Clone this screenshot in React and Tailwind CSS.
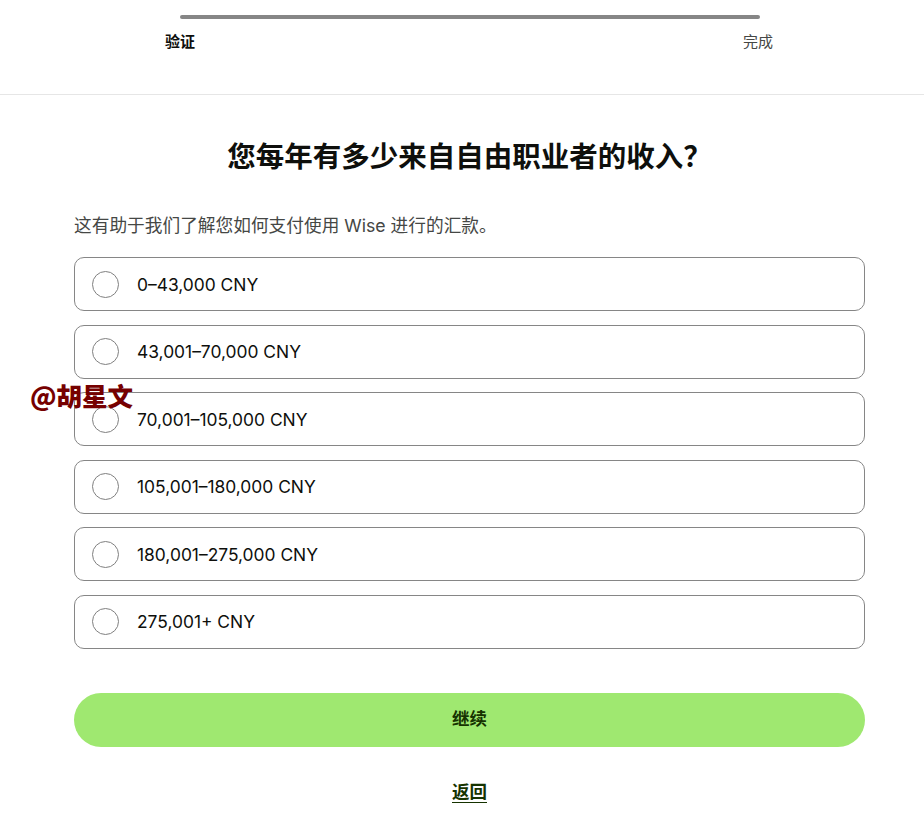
import React from "react";

const options = [
  "0–43,000 CNY",
  "43,001–70,000 CNY",
  "70,001–105,000 CNY",
  "105,001–180,000 CNY",
  "180,001–275,000 CNY",
  "275,001+ CNY",
];

const font = { fontFamily: 'Inter, "Noto Sans CJK SC", sans-serif' };

export default function App() {
  return (
    <div className="relative w-[924px] h-[816px] bg-white text-[#0e0f0c] overflow-hidden" style={font}>
      <div className="h-[95px] border-b border-[#e6e6e6]">
        <div className="ml-[165px] w-[610px] pt-[15px]">
          <div className="mx-[15px] h-[4px] rounded-full bg-[#868686]" />
          <div className="flex justify-between mt-[12px] text-[15px] leading-[22px]">
            <span className="font-bold text-[#0e0f0c]">验证</span>
            <span className="text-[#454745] mr-[2px]">完成</span>
          </div>
        </div>
      </div>

      <div className="ml-[74px] w-[791px]">
        <h1 className="mt-[44px] text-center text-[28.5px] leading-[36px] font-bold">
          您每年有多少来自自由职业者的收入？
        </h1>
        <p className="mt-[39px] text-[17.7px] leading-[24px] text-[#454745]">
          这有助于我们了解您如何支付使用 Wise 进行的汇款。
        </p>
        <div className="mt-[19px] flex flex-col gap-[13.5px]">
          {options.map((o) => (
            <div
              key={o}
              className="h-[54px] flex items-center border border-[#868686] rounded-[10px] pl-[17px]"
            >
              <span className="w-[27px] h-[27px] rounded-full border border-[#808080] shrink-0" />
              <span className="ml-[18px] pt-[1px] text-[17.4px] leading-[24px] text-[#0e0f0c]">{o}</span>
            </div>
          ))}
        </div>
        <button className="mt-[44px] w-full h-[54px] rounded-full bg-[#9fe870] text-[#163300] text-[17.5px] font-bold flex items-center justify-center">
          继续
        </button>
        <div className="mt-[33px] flex justify-center">
          <span className="text-[17.5px] leading-[24px] font-bold text-[#163300] underline underline-offset-[4px]">
            返回
          </span>
        </div>
      </div>

      <div
        className="absolute left-[30px] top-[380px] text-[25.5px] leading-[30px] font-black text-[#760000]"
        style={{ fontFamily: '"Noto Sans CJK SC", sans-serif' }}
      >
        @胡星文
      </div>
    </div>
  );
}
